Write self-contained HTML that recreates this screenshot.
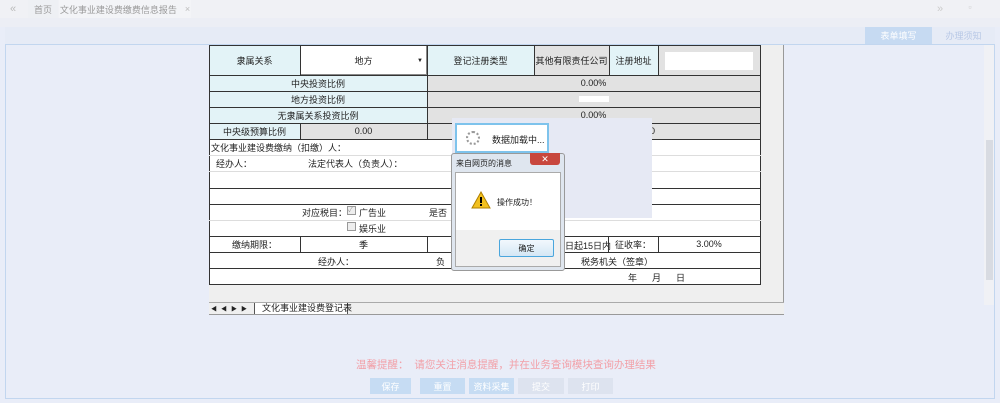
<!DOCTYPE html>
<html><head><meta charset="utf-8"><style>
*{margin:0;padding:0;box-sizing:border-box}
body{width:1000px;height:403px;overflow:hidden;background:#e9edf8;font-family:"Liberation Sans","Noto Sans CJK SC",sans-serif;font-size:9px;color:#222;position:relative}
.a{position:absolute;white-space:nowrap}
.c{position:absolute;display:flex;align-items:center;justify-content:center;white-space:nowrap}
.cy{background:#e3f3f7}.gy{background:#e2e2e2}.wh{background:#fff}
.hl{position:absolute;height:1px;background:#333}
.hl2{position:absolute;height:1px;background:#ddd}
.vl{position:absolute;width:1px;background:#333}
.btn{position:absolute;top:378px;height:16px;color:#fff;font-size:9px;display:flex;align-items:center;justify-content:center}
</style></head><body>
<div class="a" style="left:0;top:0;width:1000px;height:18px;background:#f0f1f5"></div>
<div class="c" style="left:0;top:0;width:26px;height:18px;color:#bbb;font-size:11px">«</div>
<div class="c" style="left:28px;top:0;width:30px;height:18px;color:#999;background:#eef0f4">首页</div>
<div class="c" style="left:59px;top:0;width:132px;height:18px;color:#999;background:#f3f4f7">文化事业建设费缴费信息报告 <span style="margin-left:8px;color:#bbb">×</span></div>
<div class="c" style="left:930px;top:0;width:20px;height:18px;color:#ccc;font-size:11px">»</div>
<div class="c" style="left:962px;top:0;width:16px;height:14px;color:#ccc">▫</div>
<div class="a" style="left:0;top:18px;width:1000px;height:9px;background:#eceef5"></div>
<div class="a" style="left:5px;top:27px;width:990px;height:17px;background:#e6ebf6"></div>
<div class="c" style="left:865px;top:27px;width:67px;height:17px;background:#c6daf2;color:#fff">表单填写</div>
<div class="c" style="left:932px;top:27px;width:63px;height:17px;color:#b8c8e6">办理须知</div>
<div class="a" style="left:5px;top:44px;width:990px;height:355px;border:1px solid #c2d6ef;background:#e9edf8"></div>
<div class="a" style="left:984px;top:45px;width:10px;height:260px;background:#f0f1f5"></div>
<div class="a" style="left:986px;top:140px;width:7px;height:140px;background:#d8dbe2"></div>
<div class="a" style="left:209px;top:45px;width:575px;height:270px;background:#efefef;border-right:1px solid #999"></div>
<div class="a wh" style="left:209px;top:139px;width:551px;height:145px"></div>
<div class="c cy" style="left:209px;top:45px;width:91px;height:30px">隶属关系</div>
<div class="c wh" style="left:300px;top:45px;width:127px;height:30px;border:1px solid #888">地方<span class="a" style="right:3px;top:12px;font-size:6px">▼</span></div>
<div class="c cy" style="left:427px;top:45px;width:107px;height:30px">登记注册类型</div>
<div class="c gy" style="left:534px;top:45px;width:75px;height:30px">其他有限责任公司</div>
<div class="c cy" style="left:609px;top:45px;width:49px;height:30px">注册地址</div>
<div class="a gy" style="left:658px;top:45px;width:102px;height:30px"></div>
<div class="a wh" style="left:665px;top:52px;width:88px;height:18px"></div>
<div class="c cy" style="left:209px;top:75px;width:218px;height:16px">中央投资比例</div>
<div class="c gy" style="left:427px;top:75px;width:333px;height:16px">0.00%</div>
<div class="c cy" style="left:209px;top:91px;width:218px;height:16px">地方投资比例</div>
<div class="c gy" style="left:427px;top:91px;width:333px;height:16px"><span style="background:#fff;width:30px;height:6px"></span></div>
<div class="c cy" style="left:209px;top:107px;width:218px;height:16px">无隶属关系投资比例</div>
<div class="c gy" style="left:427px;top:107px;width:333px;height:16px">0.00%</div>
<div class="c cy" style="left:209px;top:123px;width:91px;height:16px">中央级预算比例</div>
<div class="c gy" style="left:300px;top:123px;width:127px;height:16px">0.00</div>
<div class="c gy" style="left:427px;top:123px;width:333px;height:16px;justify-content:flex-end;padding-right:105px">0</div>
<div class="a" style="left:211px;top:141px">文化事业建设费缴纳（扣缴）人：</div>
<div class="a" style="left:216px;top:157px">经办人：</div>
<div class="a" style="left:308px;top:157px">法定代表人（负责人）：</div>
<div class="a" style="left:302px;top:206px">对应税目：</div>
<div class="a" style="left:347px;top:206px;width:9px;height:9px;border:1px solid #999;background:#eee;font-size:7px;color:#999;line-height:7px">✓</div>
<div class="a" style="left:359px;top:206px">广告业</div>
<div class="a" style="left:429px;top:206px">是否</div>
<div class="a" style="left:347px;top:222px;width:9px;height:9px;border:1px solid #999;background:#eee"></div>
<div class="a" style="left:359px;top:222px">娱乐业</div>
<div class="c" style="left:209px;top:236px;width:91px;height:16px">缴纳期限：</div>
<div class="c" style="left:300px;top:236px;width:127px;height:16px">季</div>
<div class="a" style="left:565px;top:239px">日起15日内</div>
<div class="c" style="left:608px;top:236px;width:50px;height:16px">征收率：</div>
<div class="c" style="left:658px;top:236px;width:102px;height:16px">3.00%</div>
<div class="a" style="left:318px;top:255px">经办人：</div>
<div class="a" style="left:436px;top:255px">负</div>
<div class="a" style="left:581px;top:255px">税务机关（签章）</div>
<div class="a" style="left:628px;top:271px">年&nbsp;&nbsp;&nbsp;&nbsp;&nbsp;&nbsp;月&nbsp;&nbsp;&nbsp;&nbsp;&nbsp;&nbsp;日</div>
<div class="vl" style="left:209px;top:45px;height:240px"></div>
<div class="vl" style="left:760px;top:45px;height:240px"></div>
<div class="hl" style="left:209px;top:45px;width:552px"></div>
<div class="hl" style="left:209px;top:75px;width:552px"></div>
<div class="hl" style="left:209px;top:91px;width:552px"></div>
<div class="hl" style="left:209px;top:107px;width:552px"></div>
<div class="hl" style="left:209px;top:123px;width:552px"></div>
<div class="hl" style="left:209px;top:139px;width:552px"></div>
<div class="hl2" style="left:209px;top:155px;width:552px"></div>
<div class="hl2" style="left:209px;top:171px;width:552px"></div>
<div class="hl" style="left:209px;top:188px;width:552px"></div>
<div class="hl" style="left:209px;top:204px;width:552px"></div>
<div class="hl2" style="left:209px;top:220px;width:552px"></div>
<div class="hl" style="left:209px;top:236px;width:552px"></div>
<div class="hl" style="left:209px;top:252px;width:552px"></div>
<div class="hl" style="left:209px;top:268px;width:552px"></div>
<div class="hl" style="left:209px;top:284px;width:552px"></div>
<div class="vl" style="left:300px;top:45px;height:30px"></div>
<div class="vl" style="left:427px;top:45px;height:94px"></div>
<div class="vl" style="left:534px;top:45px;height:30px"></div>
<div class="vl" style="left:609px;top:45px;height:30px"></div>
<div class="vl" style="left:658px;top:45px;height:30px"></div>
<div class="vl" style="left:300px;top:123px;height:16px"></div>
<div class="vl" style="left:300px;top:236px;height:16px"></div>
<div class="vl" style="left:427px;top:236px;height:16px"></div>
<div class="vl" style="left:608px;top:236px;height:16px"></div>
<div class="vl" style="left:658px;top:236px;height:16px"></div>
<div class="a" style="left:209px;top:302px;width:575px;height:13px;background:#efefef;border-top:1px solid #aaa;border-bottom:1px solid #999"></div>
<div class="a" style="left:211px;top:304px;font-size:6px;letter-spacing:4px">◀◀▶▶</div>
<div class="a" style="left:254px;top:303px;width:94px;height:11px;background:#fff;font-size:9px;padding-left:7px;line-height:11px;border-left:1px solid #555;border-right:1px solid #555">文化事业建设费登记表</div>
<div class="a" style="left:452px;top:118px;width:200px;height:100px;background:#e6e9f4"></div>
<div class="a" style="left:455px;top:123px;width:94px;height:30px;background:#fff;border:2px solid #7ec3ec"></div>
<div class="a" style="left:466px;top:131px;width:14px;height:14px;border:2px dotted #999;border-radius:50%"></div>
<div class="a" style="left:492px;top:133px">数据加载中...</div>
<div class="a" style="left:451px;top:153px;width:114px;height:118px;background:#dfe6ef;border:1px solid #999;border-radius:3px"></div>
<div class="a" style="left:456px;top:158px;font-size:8px">来自网页的消息</div>
<div class="c" style="left:530px;top:153px;width:30px;height:12px;background:#c8473d;color:#fff;font-size:9px;border-radius:0 0 3px 3px">✕</div>
<div class="a" style="left:455px;top:172px;width:106px;height:95px;background:#f0f0f0;border:1px solid #aaa"></div>
<div class="a" style="left:456px;top:173px;width:104px;height:57px;background:#fff"></div>
<svg class="a" style="left:471px;top:191px" width="20" height="18"><polygon points="10,1 19,17 1,17" fill="#f2c01e" stroke="#b08000"/><rect x="9" y="6" width="2" height="6" fill="#000"/><rect x="9" y="13" width="2" height="2" fill="#000"/></svg>
<div class="a" style="left:497px;top:197px;font-size:8px">操作成功！</div>
<div class="c" style="left:499px;top:239px;width:55px;height:18px;border:1px solid #4aa6dd;border-radius:2px;background:linear-gradient(#f2f8fd,#d4e7f5);font-size:8px">确定</div>
<div class="a" style="left:356px;top:357px;color:#f2a0a8;font-size:10.5px">温馨提醒：&nbsp;&nbsp;请您关注消息提醒，并在业务查询模块查询办理结果</div>
<div class="btn" style="left:370px;width:41px;background:#c6dcf3">保存</div>
<div class="btn" style="left:420px;width:45px;background:#c6dcf3">重置</div>
<div class="btn" style="left:469px;width:45px;background:#c6dcf3">资料采集</div>
<div class="btn" style="left:518px;width:46px;background:#dde3ef">提交</div>
<div class="btn" style="left:568px;width:45px;background:#dde3ef">打印</div>
</body></html>
